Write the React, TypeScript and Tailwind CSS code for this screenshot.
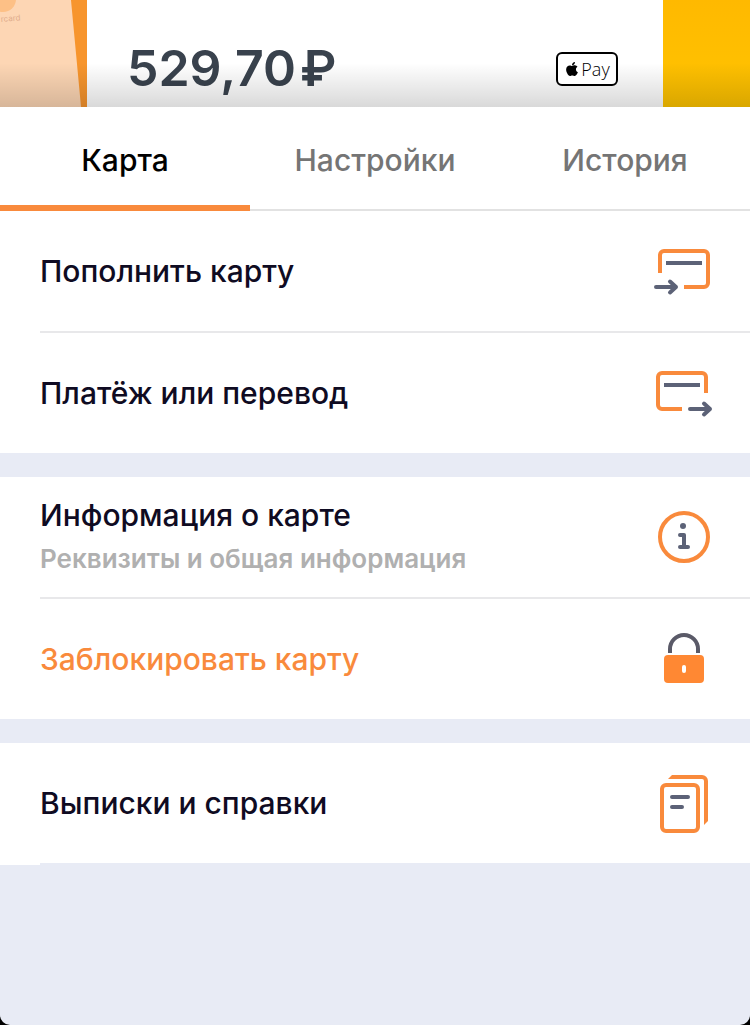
import { useState } from "react";
import type { ReactNode } from "react";
import { FaApple } from "react-icons/fa";

interface Action {
  title: string;
  subtitle?: string;
  danger?: boolean;
  icon: ReactNode;
}

const ORANGE = "#f98a3c";
const SLATE = "#5c6277";

const tabs = ["Карта", "Настройки", "История"];

function Icon({ children }: { children: ReactNode }) {
  return (
    <svg
      viewBox="0 0 60 60"
      className="size-[60px] shrink-0"
      fill="none"
      strokeWidth={4}
      aria-hidden="true"
    >
      {children}
    </svg>
  );
}

// Grouped the same way as on the card screen, one array per white block
const groups: Action[][] = [
  [
    {
      title: "Пополнить карту",
      icon: (
        <Icon>
          <path
            stroke={ORANGE}
            d="M6 32V14a4 4 0 0 1 4-4h40a4 4 0 0 1 4 4v28a4 4 0 0 1-4 4H30"
          />
          <path stroke={SLATE} d="M12 22h36" />
          <path
            stroke={SLATE}
            strokeLinecap="round"
            strokeLinejoin="round"
            d="M2 46h20M16 40.5l6 5.5-6 5.5"
          />
        </Icon>
      ),
    },
    {
      title: "Платёж или перевод",
      icon: (
        <Icon>
          <path
            stroke={ORANGE}
            d="M28 46H8a4 4 0 0 1-4-4V14a4 4 0 0 1 4-4h40a4 4 0 0 1 4 4v16"
          />
          <path stroke={SLATE} d="M10 22h36" />
          <path
            stroke={SLATE}
            strokeLinecap="round"
            strokeLinejoin="round"
            d="M36 46h20M50 40.5l6 5.5-6 5.5"
          />
        </Icon>
      ),
    },
  ],
  [
    {
      title: "Информация о карте",
      subtitle: "Реквизиты и общая информация",
      icon: (
        <Icon>
          <circle cx="30" cy="30" r="24" stroke={ORANGE} />
          <circle cx="29" cy="19" r="3" fill={SLATE} />
          <path
            stroke={SLATE}
            strokeLinecap="round"
            strokeLinejoin="round"
            d="M26 28h4v12M26 40h8"
          />
        </Icon>
      ),
    },
    {
      title: "Заблокировать карту",
      danger: true,
      icon: (
        <Icon>
          <path stroke="#5a5a68" d="M16 24v-4a14 14 0 0 1 28 0v4" />
          <rect x="10" y="26" width="40" height="28" rx="4" fill="#ff8833" />
          <rect x="28" y="36" width="4" height="8" rx="2" fill="#fff" />
        </Icon>
      ),
    },
  ],
  [
    {
      title: "Выписки и справки",
      icon: (
        <Icon>
          <path
            fill={ORANGE}
            d="M14 6l4-4h30a6 6 0 0 1 6 6v40l-4 4V8a2 2 0 0 0-2-2z"
          />
          <rect x="8" y="12" width="36" height="46" rx="4" stroke={ORANGE} />
          <path stroke={SLATE} strokeLinecap="round" d="M18 24h16M18 34h10" />
        </Icon>
      ),
    },
  ],
];

function ActionRow({ title, subtitle, danger, icon }: Action) {
  return (
    <button
      type="button"
      className="flex h-[120px] w-full items-center justify-between pr-9 text-left"
    >
      <span className="flex flex-col gap-1">
        <span
          className={
            danger
              ? "text-[30px] leading-10 font-[450] text-[#f98a3c]"
              : "text-[30px] leading-10 font-[450] text-[#0f0b22]"
          }
        >
          {title}
        </span>
        {subtitle && (
          <span className="text-[26px] leading-10 font-semibold text-[#b0b0b0]">
            {subtitle}
          </span>
        )}
      </span>
      {icon}
    </button>
  );
}

function CardHeader() {
  return (
    <header className="relative flex h-[107px] overflow-hidden">
      <svg
        viewBox="0 0 87 107"
        className="h-[107px] w-[87px] shrink-0"
        aria-hidden="true"
      >
        <rect width="87" height="107" fill="#f7952d" />
        <path d="M0 0h71l10 107H0z" fill="#fdd6b4" />
        <circle cx="3" cy="-1" r="13" fill="#fdc086" />
        <text
          x="1"
          y="22"
          fontSize="8"
          fontFamily="Inter, sans-serif"
          fill="#e0ac8c"
          transform="rotate(-5 1 22)"
        >
          rcard
        </text>
      </svg>
      <div className="flex flex-1 items-start justify-between bg-white pr-[45px] pl-10">
        <p className="flex gap-1 pt-10 text-[50px] leading-[56px] font-semibold text-[#39424d]">
          <span>529,70</span>
          <span>₽</span>
        </p>
        <span className="z-10 mt-[52px] flex h-[34px] w-[62px] items-center justify-center gap-px rounded-md border-2 border-black bg-white text-black">
          <FaApple className="size-4" />
          <span className="font-['Open_Sans',sans-serif] text-lg leading-6 font-light">
            Pay
          </span>
        </span>
      </div>
      <div className="w-[87px] shrink-0 bg-linear-to-b from-[#ffb900] to-[#ffc400]" />
      <div className="absolute inset-x-0 bottom-0 h-11 bg-linear-to-b from-transparent to-black/15" />
    </header>
  );
}

export default function App() {
  const [activeTab, setActiveTab] = useState(tabs[0]);

  return (
    <div className="bg-black font-[Inter,sans-serif]">
      <div className="min-h-screen overflow-hidden rounded-b-[10px] bg-[#e8ebf5]">
        <CardHeader />

        <nav className="grid grid-cols-3 bg-white">
          {tabs.map((tab) => (
            <button
              key={tab}
              type="button"
              onClick={() => setActiveTab(tab)}
              className={
                tab === activeTab
                  ? "h-[104px] border-b-6 border-[#f98a3c] pt-2 text-[30px] font-[450] text-black"
                  : "h-[104px] border-b-2 border-[#e2e2e2] pt-1 text-[30px] font-[450] text-[#757575]"
              }
            >
              {tab}
            </button>
          ))}
        </nav>

        <main className="flex flex-col gap-6">
          {groups.map((group, index) => (
            <section key={index} className="bg-white pl-10">
              {group.map((action, i) => (
                <div
                  key={action.title}
                  className={
                    i < group.length - 1
                      ? "border-b-2 border-[#e8e8ea]"
                      : index === groups.length - 1
                        ? "border-b-2 border-[#e8ebf5]"
                        : ""
                  }
                >
                  <ActionRow {...action} />
                </div>
              ))}
            </section>
          ))}
        </main>
      </div>
    </div>
  );
}
